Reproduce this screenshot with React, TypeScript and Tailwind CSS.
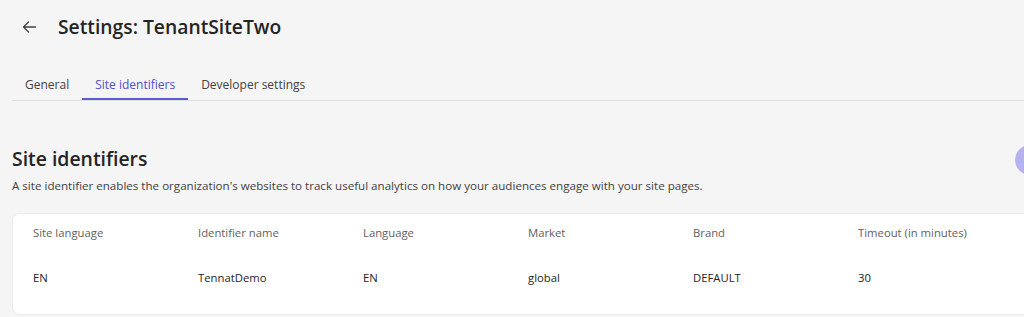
import React from 'react'

const columns = [
  { label: 'Site language', value: 'EN' },
  { label: 'Identifier name', value: 'TennatDemo' },
  { label: 'Language', value: 'EN' },
  { label: 'Market', value: 'global' },
  { label: 'Brand', value: 'DEFAULT' },
  { label: 'Timeout (in minutes)', value: '30' },
]

const tabs = ['General', 'Site identifiers', 'Developer settings']

const App = () => {
  return (
    <div className="relative w-[1024px] h-[317px] overflow-hidden bg-[#f5f5f5] font-['Open_Sans',sans-serif] text-[#242424]">
      {/* HEADER */}
      <div className="flex items-center h-[28px] mt-[13px] pl-[21px]">
        <svg width="16" height="16" viewBox="0 0 16 16" fill="none" className="text-[#424242]">
          <path d="M14.5 8H2.5M7.5 3L2.5 8L7.5 13" stroke="currentColor" strokeWidth="1.3" strokeLinecap="round" strokeLinejoin="round" />
        </svg>
        <h1 className="ml-[21px] text-[19.3px] font-semibold leading-[28px]">Settings: TenantSiteTwo</h1>
      </div>

      {/* TABS */}
      <div className="flex ml-[12px] mt-[29px] border-b border-[#e0e0e0]">
        {tabs.map((tab) => {
          const active = tab === 'Site identifiers'
          return (
            <div
              key={tab}
              className={
                active
                  ? 'px-[13px] h-[30px] text-[12px] leading-[29px] text-[#4f4fcf] border-b-2 border-[#5b5bd6] -mb-px'
                  : 'px-[13px] h-[30px] text-[12px] leading-[29px] text-[#424242]'
              }
            >
              {tab}
            </div>
          )
        })}
      </div>

      {/* SECTION */}
      <div className="px-[12px] pt-[44px]">
        <h2 className="text-[19.4px] font-semibold leading-[28px]">Site identifiers</h2>
        <p className="mt-[5px] text-[11.6px] leading-[16px] text-[#424242]">
          A site identifier enables the organization's websites to track useful analytics on how your audiences engage with your site pages.
        </p>

        <div className="mt-[19px] w-[1040px] h-[102px] bg-white rounded-lg border border-[#ebebeb]">
          <div className="grid grid-cols-[165px_165px_165px_165px_165px_165px] pl-[20px] pt-[11px] text-[11.3px] text-[#616161] leading-[16px]">
            {columns.map((c) => (
              <div key={c.label}>{c.label}</div>
            ))}
          </div>
          <div className="grid grid-cols-[165px_165px_165px_165px_165px_165px] pl-[20px] pt-[29px] text-[11.3px] text-[#242424] leading-[16px]">
            {columns.map((c) => (
              <div key={c.label}>{c.value}</div>
            ))}
          </div>
        </div>
      </div>

      {/* floating action, cut off at the edge */}
      <div className="absolute left-[1015px] top-[145px] w-[30px] h-[30px] rounded-full bg-[#b6b2ee]" />
    </div>
  )
}

export default App
